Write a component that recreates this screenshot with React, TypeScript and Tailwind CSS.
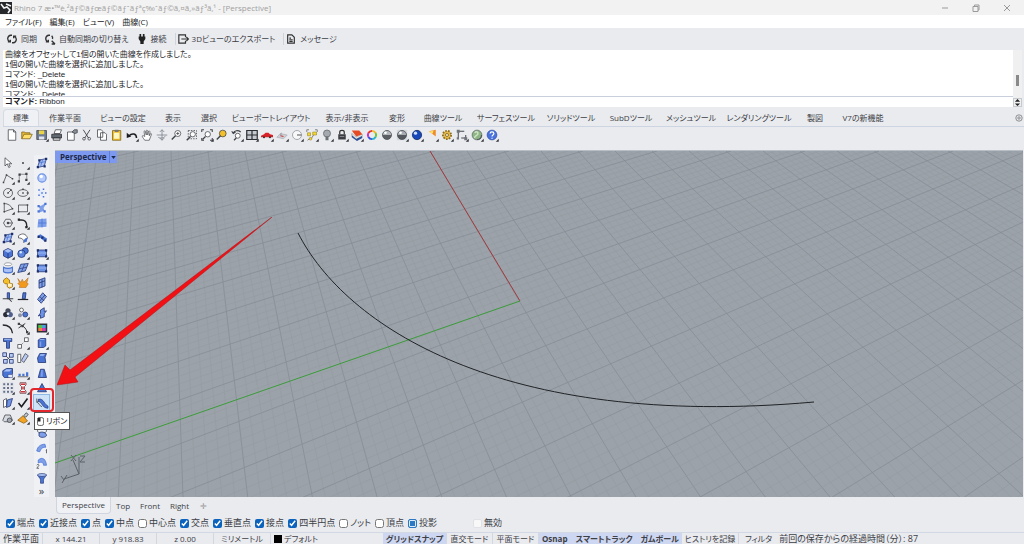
import { type ReactNode } from "react";
import clsx from "clsx";

const INK = "#3f4247";
const BLUE = "#4a74d4";
const LIGHT = "#a9c0f4";
const NAVY = "#1d2f6b";
const GOLD = "#f3c02c";

const icons: Record<string, ReactNode> = {
  // standard toolbar
  new: <path d="M3 1h7l3 3v11H3zM10 1v3h3" fill="#fff" stroke={INK} />,
  open: (
    <>
      <path d="M1 13V4h4l1 1h6v3" fill="#e6b93a" stroke="#7c6216" />
      <path d="M1 13l3-6h11l-3 6z" fill="#ffdf6b" stroke="#7c6216" />
    </>
  ),
  save: (
    <>
      <path d="M1 2h13v12H1z" fill="#6e7b94" stroke={INK} />
      <path d="M4 2h7v5H4z" fill="#e9d44a" />
      <path d="M4 10h7v4H4z" fill="#dfe4ee" />
    </>
  ),
  print: (
    <>
      <path d="M4 6l2-5h8l-2 5z" fill="#fff" stroke={INK} />
      <path d="M1 7h13v5H1z" fill="#646a73" stroke="#26282c" />
      <path d="M3 12h9v3H3z" fill="#ddd" stroke="#26282c" />
    </>
  ),
  props: (
    <>
      <path d="M2 4h9v11H2z" fill="#fff" stroke={INK} />
      <path d="M8 4l3-3h4v4l-3 1z" fill="#8b9098" stroke={INK} />
    </>
  ),
  cut: (
    <>
      <path d="M3 1l7 11M12 1L5 12" fill="none" stroke={INK} strokeWidth="1.2" />
      <circle cx="4" cy="13" r="1.8" fill="none" stroke={INK} />
      <circle cx="11" cy="13" r="1.8" fill="none" stroke={INK} />
    </>
  ),
  copy: <path d="M2 1h5l2 2v8H2zM6 5h6l2 2v8H6z" fill="#fff" stroke={INK} />,
  paste: (
    <>
      <path d="M2 2h11v13H2z" fill={GOLD} stroke="#7c6216" />
      <path d="M5 1h5v3H5z" fill="#777" />
      <path d="M4 5h7v8H4z" fill="#fdf6c6" />
    </>
  ),
  undo: (
    <>
      <path d="M14 12c0-6-6-7-10-3" fill="none" stroke="#1c1d20" strokeWidth="2" />
      <path d="M1 5v7l6-2z" fill="#1c1d20" />
    </>
  ),
  hand: <path d="M5 15C3 12 1 10 2 9s2 1 3 1L4 3c1-1 2 0 2 1l1 4V2c1-1 2 0 2 1v5l1-5c1-1 2 0 2 1l-1 5 2-3c1 0 1 1 1 1l-3 8z" fill="#fff" stroke={INK} strokeWidth="0.9" />,
  rotateView: <path d="M8 1v14M1 8h14M5 4l3-3 3 3M5 12l3 3 3-3M3 11c3 2 8 1 10-2" fill="none" stroke="#777c84" />,
  zoomIn: (
    <>
      <circle cx="9" cy="6" r="4" fill="#fff" stroke={INK} />
      <path d="M6 9l-5 5" stroke={INK} strokeWidth="2" />
      <path d="M7 6h4M9 4v4" stroke={INK} />
    </>
  ),
  zoomWindow: (
    <>
      <path d="M3 2h11v11H3z" fill="none" stroke={INK} strokeDasharray="2 1.5" />
      <circle cx="9" cy="7" r="3.5" fill="#fff" stroke={INK} />
      <path d="M6 10l-5 5" stroke={INK} strokeWidth="1.8" />
    </>
  ),
  zoomExtents: (
    <>
      <path d="M1 4V1h3M12 1h3v3M15 12v3h-3M4 15H1v-3" fill="none" stroke={INK} strokeWidth="1.4" />
      <circle cx="9" cy="7" r="3.6" fill="#fff" stroke={INK} />
      <path d="M6 10l-4 4" stroke={INK} strokeWidth="1.6" />
    </>
  ),
  zoomSelected: (
    <>
      <circle cx="9" cy="6" r="4.5" fill={GOLD} stroke={INK} />
      <path d="M6 9l-5 5" stroke={INK} strokeWidth="2" />
    </>
  ),
  undoView: (
    <>
      <path d="M13 4C9 1 5 2 3 5M1 3l2 3 3-2" fill="none" stroke={INK} strokeWidth="1.5" />
      <circle cx="9" cy="9" r="3.3" fill="#fff" stroke={INK} />
      <path d="M7 12l-3 3" stroke={INK} strokeWidth="1.6" />
    </>
  ),
  viewports: (
    <>
      <path d="M1 2h14v12H1z" fill="#c4c8cf" stroke="#2c2e33" strokeWidth="1.6" />
      <path d="M8 2v12M1 8h14" stroke="#2c2e33" strokeWidth="1.6" />
    </>
  ),
  car: (
    <>
      <path d="M0 9l4-2 2-2h4l2 2 4 1v3H0z" fill="#d8222a" />
      <circle cx="4" cy="11" r="1.4" fill="#333" />
      <circle cx="12" cy="11" r="1.4" fill="#333" />
    </>
  ),
  cplane: (
    <>
      <path d="M1 11l5-5 9 2-5 5z" fill="#ccd0d6" stroke="#9ba0a7" strokeWidth="0.7" />
      <path d="M6 9l4 1" stroke="#d03a3a" strokeWidth="1.6" />
      <path d="M6 9l1-4" stroke="#888" />
    </>
  ),
  circleSet: (
    <>
      <circle cx="8" cy="8" r="6" fill="#f8f8f8" stroke="#8b9098" />
      <path d="M8 8h6" stroke="#666" strokeWidth="1.5" />
    </>
  ),
  selectPts: (
    <>
      <path d="M1 4V1h3M12 1h3v3M6 12l-4 3M10 8l-3 5" fill="none" stroke="#666" />
      <path d="M2 5h4v4H2zM9 4h5v4H9z" fill="#f5d92c" stroke="#8b7720" strokeWidth="0.7" />
      <circle cx="6" cy="13" r="1.8" fill="#f5d92c" stroke="#8b7720" strokeWidth="0.7" />
    </>
  ),
  bulb: (
    <>
      <circle cx="8" cy="6" r="4.7" fill="#a5a9af" stroke="#5f646b" />
      <path d="M6 10h4v5H6z" fill="#6c7077" />
    </>
  ),
  lock: (
    <>
      <path d="M5 7V4c0-3 6-3 6 0v3" fill="none" stroke="#333" strokeWidth="1.6" />
      <path d="M3 7h10v7H3z" fill="#3b3d42" />
      <path d="M5 10h6" stroke="#9a9da3" />
    </>
  ),
  layers: (
    <>
      <path d="M1 8l6 5 8-4v3l-7 4-7-5z" fill="#2d4f9c" />
      <path d="M1 6l6 5 8-4v2l-8 4-6-5z" fill="#fff" stroke="#555" strokeWidth="0.5" />
      <path d="M1 2h10l4 5-8 3z" fill="#e54a25" />
    </>
  ),
  wheel: (
    <g fill="none" strokeWidth="2.6">
      <path d="M8 2.500a5.500 5.500 0 0 1 4.800 2.800" stroke="#f0b82a" />
      <path d="M12.800 5.300a5.500 5.500 0 0 1 0 5.400" stroke="#6cc634" />
      <path d="M12.800 10.700A5.500 5.500 0 0 1 8 13.500" stroke="#27b5c9" />
      <path d="M8 13.500a5.500 5.500 0 0 1-4.800-2.800" stroke="#3454dc" />
      <path d="M3.200 10.700a5.500 5.500 0 0 1 0-5.400" stroke="#c532c4" />
      <path d="M3.200 5.300A5.500 5.500 0 0 1 8 2.500" stroke="#e6332a" />
    </g>
  ),
  grayBall: (
    <>
      <circle cx="8" cy="8" r="6" fill="#5b5e63" stroke="#4a4d52" />
      <path d="M2.5 8a5.5 5.5 0 0 1 11 0z" fill="#b4b7bc" />
      <circle cx="6" cy="5" r="1.8" fill="#fff" />
    </>
  ),
  grayBallBox: (
    <>
      <path d="M1 1h14v14H1z" fill="#d5d8dc" />
      <circle cx="8" cy="8" r="6" fill="#55585d" stroke="#4a4d52" />
      <path d="M2.5 8a5.5 5.5 0 0 1 11 0z" fill="#a9acb1" />
      <circle cx="6" cy="5" r="1.8" fill="#fff" />
    </>
  ),
  blueBall: (
    <>
      <circle cx="8" cy="8" r="6.2" fill="#1747b8" stroke="#10275e" />
      <circle cx="6" cy="5.5" r="2.2" fill="#cfe0ff" />
    </>
  ),
  spot: (
    <>
      <path d="M4 3l9-2v9z" fill="#f08a24" />
      <path d="M3 4l7-2-1 4z" fill="#ffe16b" />
    </>
  ),
  gear: (
    <>
      <circle cx="8" cy="8" r="5.5" fill="#e6bb4c" stroke="#8b6c1e" strokeWidth="2.4" strokeDasharray="2.2 1.6" />
      <circle cx="8" cy="8" r="2" fill="#f5f0dc" stroke="#755a14" />
    </>
  ),
  dimension: (
    <>
      <path d="M3 12V3h8M7 12h6V8" fill="none" stroke={INK} strokeWidth="1.3" />
      <path d="M1 1h4v4H1zM11 11h4v4h-4zM1 11h3v3H1z" fill="#70757d" />
    </>
  ),
  earth: (
    <>
      <circle cx="8" cy="8" r="6.5" fill="#8fb585" stroke="#5c6b68" />
      <path d="M5 5c3-3 5 0 4 2s-5 2-4 5" fill="none" stroke="#cfe3c4" strokeWidth="2" />
      <path d="M8 14c4 0 6-3 6-6" fill="none" stroke="#55595f" strokeWidth="1.6" />
    </>
  ),
  help: (
    <>
      <circle cx="8" cy="8" r="6.5" fill="#4a72dc" stroke="#2f50a8" />
      <path d="M5.5 6c0-3 5-3 5 0 0 2-2.500 1.800-2.500 4M8 11.500v1.500" fill="none" stroke="#fff" strokeWidth="1.6" />
    </>
  ),

  // left toolbars
  pointer: <path d="M4 1v11l3-3 2 5 2-1-2-4h4z" fill="#fff" stroke={INK} />,
  point: <circle cx="8" cy="8" r="1.3" fill={INK} />,
  polyline: (
    <>
      <path d="M2 14L6 4l8 5" fill="none" stroke={INK} />
      <path d="M1 13h2v2H1zM5 3h2v2H5zM13 8h2v2h-2z" fill={INK} />
    </>
  ),
  curvePts: (
    <>
      <path d="M3 13V3h10v6" fill="none" stroke="#6d7178" />
      <path d="M2 2h3v3H2zM11 1h3v3h-3zM1 11h3v3H1zM11 9h3v3h-3z" fill={INK} />
    </>
  ),
  circle: (
    <>
      <circle cx="8" cy="8" r="6" fill="none" stroke={INK} />
      <path d="M8 8l4-4" stroke={INK} />
      <path d="M7 7h2v2H7zM11 3h2v2h-2z" fill={INK} />
    </>
  ),
  ellipse: (
    <>
      <ellipse cx="8" cy="8" rx="7" ry="4.5" fill="none" stroke={INK} />
      <path d="M7 7h2v2H7zM7 2h2v2H7zM13 7h2v2h-2z" fill={INK} />
    </>
  ),
  arc: (
    <>
      <path d="M3 2c5 0 9 3 11 7L3 13z" fill="none" stroke={INK} />
      <path d="M2 1h2v2H2zM13 8h2v2h-2zM2 12h2v2H2z" fill={INK} />
    </>
  ),
  rect: (
    <>
      <path d="M2 4h12v9H2z" fill="none" stroke={INK} />
      <path d="M1 12h2v2H1zM13 3h2v2h-2z" fill={INK} />
    </>
  ),
  polygon: (
    <>
      <path d="M5 3h6l3 5-3 5H5L2 8z" fill="none" stroke={INK} />
      <path d="M7 8h7M7 7h2v2H7z" stroke={INK} />
    </>
  ),
  fillet: (
    <>
      <path d="M2 4h4c4 0 7 3 7 8v2" fill="none" stroke="#26282c" strokeWidth="1.8" />
      <path d="M1 2h3v3H1zM11 12h3v3h-3z" fill="#26282c" />
    </>
  ),
  surface: (
    <>
      <path d="M5 4l9-2-3 10-9 2z" fill={LIGHT} stroke={NAVY} />
      <path d="M4 8l9-2M9 3L6 13" stroke={BLUE} />
      <path d="M3 3h3v3H3zM12 1h3v3h-3zM10 11h3v3h-3zM1 12h3v3H1z" fill={NAVY} />
    </>
  ),
  bend: (
    <>
      <path d="M2 5c5-4 10-3 12 3l-5 6c0-4-2-6-7-6z" fill="#fff" stroke={INK} />
      <path d="M9 14c0-4 1-6 5-6l-1 5z" fill={BLUE} />
    </>
  ),
  box: (
    <>
      <path d="M2 5l6-3 6 3v7l-6 3-6-3z" fill={BLUE} stroke={NAVY} />
      <path d="M3 5l5-2.500L13 5 8 7.500z" fill={LIGHT} />
      <path d="M8 8v7" stroke={NAVY} />
    </>
  ),
  spheres: (
    <>
      <circle cx="11" cy="5" r="4" fill={BLUE} stroke={NAVY} />
      <circle cx="6" cy="9" r="5" fill="#5f88e0" stroke={NAVY} />
      <circle cx="5" cy="7" r="1.6" fill="#dbe6ff" />
    </>
  ),
  cylinderEdit: (
    <>
      <ellipse cx="8" cy="3" rx="5" ry="2" fill="#fff" stroke="#868b93" />
      <path d="M2 7c3 2 9 2 12 0v6c-3 2-9 2-12 0z" fill={LIGHT} stroke={BLUE} strokeWidth="1.4" />
    </>
  ),
  patch: (
    <>
      <path d="M5 3l10-1-4 10-10 2z" fill="#7f9fe8" stroke={NAVY} />
      <path d="M3 9l10-2M10 3L6 13" stroke={NAVY} strokeWidth="0.8" />
    </>
  ),
  union: (
    <>
      <path d="M2 4l4-3 4 3v4l4 1v4l-4 2-3-2V9H4L2 7z" fill={GOLD} stroke="#946410" />
      <path d="M8 9h5v4H8z" fill="#fff2c4" />
    </>
  ),
  explode: <path d="M1 2l4 5 2-4 2 4 6-6-2 7 2 1-3 5H3l1-3-3-2 2-2z" fill="#f39a1e" stroke="#a35a0c" strokeWidth="0.6" />,
  trim: (
    <>
      <path d="M7 1h3v8H7z" fill={BLUE} stroke={NAVY} />
      <path d="M1 9h8l4 4M9 9h6" fill="none" stroke={INK} strokeWidth="1.4" />
    </>
  ),
  split: (
    <>
      <path d="M8 1h4l-1 8H7z" fill={BLUE} stroke={NAVY} />
      <path d="M1 10h14" stroke="#24262b" strokeWidth="1.6" />
    </>
  ),
  group: (
    <>
      <circle cx="8" cy="5" r="3.5" fill="#444b5c" />
      <circle cx="5" cy="10" r="3.5" fill="#252a36" />
      <circle cx="11" cy="10" r="3.5" fill="#4e5f8c" />
      <circle cx="8" cy="9" r="1.8" fill="#e7eaf1" />
    </>
  ),
  ungroup: (
    <>
      <circle cx="6" cy="4" r="2.6" fill="#fff" stroke={INK} />
      <circle cx="4" cy="11" r="2.6" fill="#8b93a3" />
      <circle cx="11" cy="10" r="3.3" fill={BLUE} stroke={NAVY} />
    </>
  ),
  curveArc: <path d="M1 4c7 0 12 3 13 11" fill="none" stroke="#26282c" strokeWidth="1.8" />,
  curveEdit: (
    <>
      <path d="M2 3c5 1 10 4 12 12M2 8l9-6" fill="none" stroke="#26282c" strokeWidth="1.2" />
      <path d="M1 1h3v3H1zM6 4h3v3H6zM12 12h3v3h-3z" fill={INK} />
    </>
  ),
  text: (
    <>
      <path d="M2 2h11v4H10v9H6V6H2z" fill={BLUE} stroke={NAVY} />
      <path d="M3 3h9" stroke={LIGHT} strokeWidth="1.4" />
    </>
  ),
  move: (
    <>
      <path d="M5 11l6-6" stroke={INK} strokeDasharray="1.5 1.5" />
      <path d="M1 10h5v5H1zM10 1h5v5h-5z" fill="#fff" stroke={INK} />
    </>
  ),
  copyObj: (
    <>
      <path d="M5 5l6 6M11 6l-5 5" stroke={INK} />
      <path d="M1 1h5v5H1zM10 2h5v5h-5zM2 10h5v5H2zM10 10h5v5h-5z" fill="#b9caf5" stroke={NAVY} />
    </>
  ),
  rotate: (
    <>
      <path d="M1 3h4v11H1z" fill="#fff" stroke={INK} />
      <path d="M11 2l4 3-6 9-3-3z" fill="#b9caf5" stroke={INK} />
    </>
  ),
  solidEdit: (
    <>
      <path d="M1 5l5-3h8v7l-4 5H3l-2-3z" fill={BLUE} stroke={NAVY} />
      <path d="M2 6l4-3h7l-3 3z" fill={LIGHT} />
      <path d="M8 10h6v4H8z" fill="#e1e9ff" stroke={NAVY} strokeWidth="0.6" />
    </>
  ),
  align: (
    <>
      <path d="M1 13h14" stroke={INK} />
      <path d="M2 9h3v3H2zM7 9h3v3H7zM12 7h3v5h-3z" fill={BLUE} />
    </>
  ),
  array: (
    <path d="M1 1h4v4H1zM6 1h4v4H6zM11 1h4v4h-4zM1 6h4v4H1zM6 6h4v4H6zM11 6h4v4h-4zM1 11h4v4H1zM6 11h4v4H6zM11 11h4v4h-4z" fill="#66708c" stroke="#eceef2" strokeWidth="1.2" />
  ),
  clamp: (
    <>
      <path d="M4 1h8v3l-2 2v4l2 2v3H4v-3l2-2V6L4 4z" fill="#fff" stroke="#5a2a2e" />
      <path d="M5 2h6v2H5zM5 12h6v2H5zM7 6h2v4H7z" fill="#cd343c" />
    </>
  ),
  planes: (
    <>
      <path d="M2 4l4-2v10l-4 2z" fill="#fff" stroke={INK} />
      <path d="M7 4l7-2-3 10-5 2z" fill="#6d92e6" stroke={NAVY} />
    </>
  ),
  check: <path d="M2 8l4 5L14 2" fill="none" stroke="#1c1d20" strokeWidth="2.2" />,
  cage: (
    <>
      <path d="M1 11L4 4h7l3 7-2 2H3z" fill="#d5d8de" stroke={INK} />
      <circle cx="10" cy="11" r="3" fill="#a2a7b0" stroke={INK} />
    </>
  ),
  paint: (
    <>
      <path d="M9 5l3-4 3 2-3 4z" fill="#c4c8cf" stroke={INK} />
      <path d="M8 5l6 7-5 3-8-4z" fill="#f1a426" stroke="#8a5a10" />
    </>
  ),

  // surface toolbar
  lightBall: (
    <>
      <circle cx="8" cy="8" r="5.5" fill="#b6cbfa" stroke="#6d92e6" strokeWidth="1.6" />
      <circle cx="7" cy="6" r="2.2" fill="#fff" />
    </>
  ),
  cloud: (
    <>
      <path d="M5 3l7 3-3 7-6-3z" fill="#e3ebff" />
      <path d="M3 3h2v2H3zM9 2h2v2H9zM12 7h2v2h-2zM3 10h2v2H3zM9 12h2v2H9zM7 7h2v2H7z" fill={BLUE} />
    </>
  ),
  network: (
    <>
      <path d="M3 5c4 2 6-3 11-3l-4 6 2 5c-4-2-5 1-9 1l2-5z" fill="#7f9fe8" />
      <path d="M2 4h3v3H2zM11 1h3v3h-3zM2 11h3v3H2zM10 11h3v3h-3z" fill={BLUE} />
    </>
  ),
  grid: (
    <>
      <path d="M3 3l11-1v11L2 14z" fill="#7f9fe8" />
      <path d="M8 2v12M3 8h11" stroke={BLUE} />
    </>
  ),
  blend: (
    <>
      <path d="M2 5l4-2 9 6-3 4z" fill={BLUE} />
      <path d="M2 5h3v3H2zM7 6h3v3H7zM11 10h3v3h-3z" fill={NAVY} />
    </>
  ),
  plane: (
    <>
      <path d="M2 4h12v9H2z" fill="#6d92e6" stroke={NAVY} />
      <path d="M2 8h12" stroke={LIGHT} />
      <path d="M1 3h3v3H1zM12 3h3v3h-3zM1 11h3v3H1zM12 11h3v3h-3z" fill={NAVY} />
    </>
  ),
  vertical: <path d="M4 4l8-3v11l-8 3zM4 8l8-3M8 3v11" fill="#7f9fe8" stroke={NAVY} />,
  deform: (
    <>
      <path d="M9 1l5 5-7 9-5-5z" fill="#7f9fe8" stroke={NAVY} />
      <path d="M5 6l6 6M12 4l-7 8" stroke={NAVY} />
    </>
  ),
  cutPlane: <path d="M6 4l5-3v5l3-1-3 4v4l-5 2v-4l-3 1 3-4z" fill="#6d92e6" stroke={NAVY} />,
  picture: (
    <>
      <path d="M1 2h14v12H1z" fill="#2e3138" />
      <path d="M3 4h5v4H3z" fill="#55c04a" />
      <path d="M8 4h5v4H8z" fill="#4a9fe0" />
      <path d="M3 8h5v4H3z" fill="#e8823c" />
      <path d="M8 8h5v4H8z" fill="#d33fae" />
    </>
  ),
  extrude: (
    <>
      <path d="M3 4l3-2h7v10l-3 2H3z" fill={BLUE} stroke={NAVY} />
      <path d="M4 4l2-1h6l-2 1z" fill={LIGHT} />
      <path d="M5 6h2v7H5z" fill="#7f9fe8" />
    </>
  ),
  extrudeB: (
    <>
      <path d="M5 2h9l-2 5 1 7H3l-1-6z" fill={BLUE} stroke={NAVY} />
      <path d="M6 3h6l-2 2H5z" fill={LIGHT} />
    </>
  ),
  taper: (
    <>
      <path d="M6 3h5l3 11H3z" fill={BLUE} stroke={NAVY} />
      <path d="M7 4h2v9H6z" fill="#7f9fe8" />
    </>
  ),
  cone: <path d="M8 2l6 11H2z" fill={BLUE} stroke={NAVY} />,
  ribbon: (
    <>
      <path d="M3 3c4-1 6 1 8 4s3 4 5 5v3c-4 0-6-2-8-5S5 6 3 6z" fill={BLUE} stroke={NAVY} strokeWidth="0.8" />
      <path d="M1 2v5l3-2M1 7c3 0 3 5 7 6" fill="none" stroke={INK} />
    </>
  ),
  railSweep: (
    <>
      <ellipse cx="8" cy="5" rx="6" ry="3" fill="#eef1f6" stroke={INK} />
      <path d="M4 8c4-3 10 0 10 3s-8 4-10 1z" fill="#7f9fe8" stroke={NAVY} />
    </>
  ),
  sweep: (
    <>
      <path d="M1 12C2 6 6 3 12 3l1 4c-4 0-6 1-8 6z" fill="#7f9fe8" stroke={BLUE} />
      <path d="M13 11l1-1v5" fill="none" stroke={INK} />
    </>
  ),
  sweep2: (
    <>
      <path d="M3 4c6-5 10-1 11 7h-4c0-4-3-5-7-3z" fill="#7f9fe8" stroke={BLUE} />
      <path d="M1 11c1-2 3-1 3 0l-3 4h3" fill="none" stroke={INK} />
    </>
  ),
  revolve: (
    <>
      <path d="M2 4c2 4 4 4 4 7v4h4v-4c0-3 2-3 4-7z" fill={BLUE} stroke={NAVY} strokeWidth="0.8" />
      <ellipse cx="8" cy="4" rx="6" ry="2" fill={LIGHT} stroke={NAVY} strokeWidth="0.8" />
    </>
  ),
  blank: null,
};

const standardTools = [
  "new", "open", "save.", "print", "props", "cut", "copy", "paste", "undo.", "hand", "rotateView",
  "zoomIn", "zoomWindow", "zoomExtents.", "zoomSelected", "undoView.", "viewports.", "car.", "cplane.",
  "circleSet.", "selectPts.", "bulb.", "lock.", "layers.", "wheel", "grayBall", "grayBallBox.", "blueBall.",
  "spot.", "gear.", "dimension.", "earth.", "help.",
];

const mainTools = [
  "pointer", "point.", "polyline.", "curvePts.", "circle.", "ellipse.", "arc.", "rect.", "polygon.", "fillet.",
  "surface.", "bend.", "box.", "spheres.", "cylinderEdit.", "patch.", "union.", "explode", "trim", "split",
  "group.", "ungroup.", "curveArc", "curveEdit.", "text", "move.", "copyObj", "rotate", "solidEdit.", "align.",
  "array.", "clamp.", "planes.", "check.", "cage.", "paint.",
];

const surfaceTools = [
  "surface", "lightBall", "cloud", "network", "grid", "blend", "plane.", "plane", "vertical", "deform",
  "cutPlane", "picture.", "extrude.", "extrudeB", "taper", "cone", "ribbon", "blank", "railSweep", "sweep",
  "sweep2", "revolve",
];

const menus = ["ファイル(F)", "編集(E)", "ビュー(V)", "曲線(C)"];

const history = [
  "曲線をオフセットして1個の開いた曲線を作成しました。",
  "1個の開いた曲線を選択に追加しました。",
  "コマンド: _Delete",
  "1個の開いた曲線を選択に追加しました。",
  "コマンド: _Delete",
];

const tabs = [
  { label: "標準", width: "w-[36px]" },
  { label: "作業平面", width: "w-[52px]" },
  { label: "ビューの設定", width: "w-[64px]" },
  { label: "表示", width: "w-[36px]" },
  { label: "選択", width: "w-[36px]" },
  { label: "ビューポートレイアウト", width: "w-[88px]" },
  { label: "表示/非表示", width: "w-[64px]" },
  { label: "変形", width: "w-[36px]" },
  { label: "曲線ツール", width: "w-[56px]" },
  { label: "サーフェスツール", width: "w-[70px]" },
  { label: "ソリッドツール", width: "w-[60px]" },
  { label: "SubDツール", width: "w-[60px]" },
  { label: "メッシュツール", width: "w-[60px]" },
  { label: "レンダリングツール", width: "w-[76px]" },
  { label: "製図", width: "w-[36px]" },
  { label: "V7の新機能", width: "w-[60px]" },
];

const osnaps = [
  { label: "端点", on: true },
  { label: "近接点", on: true },
  { label: "点", on: true },
  { label: "中点", on: true },
  { label: "中心点", on: false },
  { label: "交点", on: true },
  { label: "垂直点", on: true },
  { label: "接点", on: true },
  { label: "四半円点", on: true },
  { label: "ノット", on: false },
  { label: "頂点", on: false },
];

// A trailing dot on the name marks a tool that opens a flyout.
function ToolButton({ tool, active }: { tool: string; active?: boolean }) {
  const name = tool.replace(".", "");
  return (
    <button
      type="button"
      aria-label={name}
      className={clsx("flex size-[15px] items-center justify-center", active && "bg-[#cfe3f8] outline outline-[#8db9e6]")}
    >
      <svg viewBox="0 0 16 16" className="size-[12px] overflow-visible">
        {icons[name]}
        {tool.endsWith(".") && <path d="M17 13v4h-4z" fill="#33353a" />}
      </svg>
    </button>
  );
}

// Both line families run to their own vanishing point and cross y=0 at even steps.
function gridLines(vx: number, vy: number, start: number, step: number, from: number, to: number) {
  const lines = [];
  for (let i = from; i <= to; i++) {
    const x = start + (i * step) / 5;
    const end = x + ((x - vx) * 420) / -vy;
    lines.push({ x, end, major: i % 5 === 0 });
  }
  return lines;
}

function Viewport() {
  const lines = [...gridLines(100, -462, 375, 37, -150, 110), ...gridLines(2060, -440, 898, 74, -110, 130)];
  return (
    <svg viewBox="0 0 968 347" preserveAspectRatio="xMinYMin slice" className="absolute inset-0 size-full bg-[#9ba2a9]">
      {lines.map((l, i) => (
        <line
          key={i}
          x1={l.x}
          y1={0}
          x2={l.end}
          y2={420}
          stroke={l.major ? "#868d95" : "#939aa1"}
          strokeWidth={l.major ? 0.8 : 0.5}
        />
      ))}
      <path d="M375 0L465 150" stroke="#a33a3c" />
      <path d="M465 150L0 312" stroke="#3c9c3a" />
      <path d="M243 82C290 174 445 279 759 251" fill="none" stroke="#1f2226" />
      <g fill="none" stroke="#5c6268">
        <path d="M24 323L18 309M24 323L9 328M24 323V306" />
        <path d="M16 304l5 6M21 304l-5 6M25 305h5l-5 6h5M6 325l3 4M12 324l-5 8" />
      </g>
    </svg>
  );
}

function Snap({ label, on }: { label: string; on: boolean }) {
  return (
    <label className="flex items-center gap-[2px]">
      <input type="checkbox" defaultChecked={on} className="size-[9px] accent-[#0b63bd]" />
      {label}
    </label>
  );
}

function Status({ children, className }: { children: ReactNode; className?: string }) {
  return (
    <div className={clsx("flex items-center justify-center border-r border-[#d3d7e0]", className)}>{children}</div>
  );
}

export default function App() {
  return (
    <div className="flex min-h-screen flex-col overflow-hidden bg-[#e9ebef] font-['Open_Sans','Noto_Sans_CJK_JP',sans-serif] text-[9px] leading-[12px] whitespace-nowrap text-[#3d4045] [font-feature-settings:'palt']">
      <header className="flex h-[15px] items-center bg-[#f2f2f2] text-[8px] text-[#a0a0a0]">
        <svg viewBox="0 0 12 12" className="size-[12px]">
          <path d="M0 0h12v12H0z" fill="#25272a" />
          <path d="M1 2l3 4 3-1 3 3-2 3M6 2l5 2" fill="none" stroke="#f4f4f4" strokeWidth="1.6" />
        </svg>
        <h1 className="ml-[2px]">Rhino 7 æ•™è‚²ãƒ©ãƒœãƒ©ãƒˆãƒªç‰ˆãƒ©ã‚¤ã‚»ãƒ³ã‚¹ - [Perspective]</h1>
        <div className="ml-auto flex gap-[23px] pr-[13px]">
          <button type="button" aria-label="最小化">
            <svg viewBox="0 0 8 8" className="size-[8px]"><path d="M1 4h6" stroke="#9a9a9a" /></svg>
          </button>
          <button type="button" aria-label="元に戻す">
            <svg viewBox="0 0 8 8" className="size-[8px]">
              <path d="M1 2.500h5v5H1zM2.500 2.500V1H7v5H6" fill="none" stroke="#9a9a9a" />
            </svg>
          </button>
          <button type="button" aria-label="閉じる">
            <svg viewBox="0 0 8 8" className="size-[8px]"><path d="M1 1l6 6M7 1L1 7" stroke="#9a9a9a" /></svg>
          </button>
        </div>
      </header>

      <nav className="flex h-[13px] items-center gap-[8px] bg-white pl-[5px] text-[8px] text-[#222]">
        {menus.map((m) => (
          <button key={m} type="button">{m}</button>
        ))}
      </nav>

      <div className="flex h-[22px] items-center gap-[8px] pl-[7px] text-[8px]">
        <button type="button" className="flex items-center gap-1">
          <svg viewBox="0 0 12 12" className="size-[10px]" fill="none" stroke="#333" strokeWidth="1.6">
            <path d="M6 1.500H4.500A4 4 0 0 0 3 9M6 10.500h1.500A4 4 0 0 0 9 3M1 9.500h3V7M11 2.500H8V5" />
          </svg>
          同期
        </button>
        <button type="button" className="flex items-center gap-1">
          <svg viewBox="0 0 12 12" className="size-[10px] overflow-visible" fill="none" stroke="#333" strokeWidth="1.6">
            <path d="M6 1.500H4.500A4 4 0 0 0 3 9M9 6a4 4 0 0 0-1-4M1 9.500h3V7" />
            <path d="M8 8l4 4M8 12h4" />
          </svg>
          自動同期の切り替え
        </button>
        <button type="button" className="flex items-center gap-1">
          <svg viewBox="0 0 12 12" className="size-[10px]" fill="#222">
            <path d="M3 0h2v3h2V0h2v3h1v3L8 9v3H4V9L2 6V3h1z" />
          </svg>
          接続
        </button>
        <button type="button" className="flex items-center gap-1 border-l border-[#cfd3da] pl-[2px]">
          <svg viewBox="0 0 12 12" className="size-[10px] overflow-visible" fill="none" stroke="#333" strokeWidth="1.4">
            <path d="M9 4V1H1v10h8V8M4 6h9M10 3.500L12.500 6 10 8.500" />
          </svg>
          3Dビューのエクスポート
        </button>
        <button type="button" className="flex items-center gap-1 border-l border-[#cfd3da] pl-[2px]">
          <svg viewBox="0 0 12 12" className="size-[10px]" fill="none" stroke="#333" strokeWidth="1.4">
            <path d="M2 1h5l3 3v7H2zM4 5h2M4 7h4M4 9h4" />
          </svg>
          メッセージ
        </button>
      </div>

      <section className="mr-[2px] ml-[3px] flex h-[57px] text-[8px] font-['Liberation_Sans','Noto_Sans_CJK_JP',sans-serif] text-[#1b1c1f]">
        <div className="flex flex-1 flex-col bg-white">
          <div className="h-[47px] overflow-hidden border-b border-[#c9cfdd] pl-[2px] leading-[10px]">
            {history.map((line, i) => (
              <p key={i}>{line}</p>
            ))}
          </div>
          <div className="flex h-[10px] items-center gap-[2px] pl-[2px] leading-[10px]">
            <label htmlFor="command" className="font-bold">コマンド:</label>
            <input id="command" defaultValue="Ribbon" className="h-[10px] flex-1 outline-none" />
          </div>
        </div>
        <div className="flex w-[9px] flex-col bg-[#f0f0f0]">
          <div className="mx-auto mt-[25px] h-[11px] w-[3px] bg-[#8a8a8a]" />
          <button type="button" aria-label="履歴" className="mt-auto border border-[#c5c9d0]">
            <svg viewBox="0 0 8 8" className="size-[7px]"><path d="M4 0l3 3H1zM4 8l3-3H1z" fill="#222" /></svg>
          </button>
        </div>
      </section>

      <div className="mt-[2px] ml-[3px] flex h-[18px] items-stretch border-b border-[#cdd4e2] pr-px text-[8px]">
        {tabs.map((t, i) => (
          <button
            key={t.label}
            type="button"
            className={clsx(t.width, i === 0 && "rounded-t-sm border border-b-0 border-[#d5dae4] bg-[#eff1f5]")}
          >
            {t.label}
          </button>
        ))}
        <button type="button" aria-label="オプション" className="ml-auto">
          <svg viewBox="0 0 10 10" className="size-[8px]" fill="none" stroke="#777">
            <circle cx="5" cy="5" r="4" />
            <circle cx="5" cy="5" r="1.5" />
          </svg>
        </button>
      </div>
      <div className="flex h-[23px] pl-[4px]">
        {standardTools.map((t) => (
          <ToolButton key={t} tool={t} />
        ))}
      </div>

      <main className="flex flex-1">
        <div className="flex w-[55px] gap-[4px] pt-[5px]">
          <div className="grid grid-cols-[15px_15px] content-start">
            {mainTools.map((t, i) => (
              <ToolButton key={i} tool={t} />
            ))}
          </div>
          <div className="relative z-20 flex flex-col items-center bg-[#eff1f5]">
            {surfaceTools.map((t, i) => (
              <ToolButton key={i} tool={t} active={t === "ribbon"} />
            ))}
            <button type="button" className="text-[11px]">»</button>
            <div className="absolute top-[233px] -left-[4px] size-[24px] rounded-[4px] border-2 border-[#e3262b]" />
            <div role="tooltip" className="absolute top-[257px] left-0 flex h-[18px] items-center gap-[2px] border border-[#555] bg-white px-[2px] text-[8px] text-[#222]">
              <svg viewBox="0 0 8 10" className="h-[9px] w-[7px]">
                <rect x="0.5" y="0.5" width="7" height="9" rx="2" fill="#fff" stroke="#555" />
                <path d="M1 1h3v4H1z" fill="#222" />
              </svg>
              リボン
            </div>
          </div>
        </div>
        <div className="relative mr-px flex-1 border-t border-[#b8bec8]">
          <Viewport />
          <button type="button" className="relative flex h-[12px] items-center bg-[#7c99ef] pl-[5px] text-[8px] font-bold text-[#1c2747]">
            Perspective
            <span className="ml-[3px] flex h-full items-center border-l border-[#5f7dd6] px-px">
              <svg viewBox="0 0 6 4" className="h-[3px] w-[5px]"><path d="M0 0h6L3 4z" fill="#1c2747" /></svg>
            </span>
          </button>
          <svg viewBox="0 0 216 170" className="absolute top-[66px] left-[2px] z-10 h-[170px] w-[216px]">
            <path d="M215 0L13 153l-5-5-8 20 21-3-3-5z" fill="#f21015" stroke="#b01216" strokeWidth="0.5" />
          </svg>
        </div>
      </main>

      <div className="flex h-[17px] pl-[56px] text-[8px]">
        {["Perspective", "Top", "Front", "Right"].map((v, i) => (
          <button
            key={v}
            type="button"
            className={clsx("px-[5px]", i === 0 && "rounded-b border border-t-0 border-[#d0d5df] bg-[#eff1f5]")}
          >
            {v}
          </button>
        ))}
        <button type="button" aria-label="ビューを追加" className="px-[6px] text-[#999]">✛</button>
      </div>

      <div className="flex h-[18px] items-center gap-[4px] pl-[6px]">
        {osnaps.map((o) => (
          <Snap key={o.label} {...o} />
        ))}
        <label className="flex items-center gap-[2px]">
          <input
            type="checkbox"
            className="size-[9px] appearance-none rounded-[2px] border border-[#2c78c2] bg-[#2c78c2] shadow-[inset_0_0_0_1px_#dcebfa]"
          />
          投影
        </label>
        <label className="ml-[32px] flex items-center gap-[2px]">
          <input type="checkbox" className="size-[9px] appearance-none rounded-[2px] border border-[#e0e2e6] bg-[#f8f8f9]" />
          無効
        </label>
      </div>

      <footer className="flex h-[12px] border-t border-[#d3d9e4]">
        <Status className="w-[43px]">作業平面</Status>
        <Status className="w-[57px] text-[8px]">x 144.21</Status>
        <Status className="w-[57px] text-[8px]">y 918.83</Status>
        <Status className="w-[57px] text-[8px]">z 0.00</Status>
        <Status className="w-[57px] text-[8px]">ミリメートル</Status>
        <div className="flex w-[112px] items-center gap-[2px] pl-[3px] text-[8px]">
          <span className="size-[8px] bg-black" />
          デフォルト
        </div>
        <Status className="w-[64px] bg-[#ced7f1] text-[8px] font-bold">グリッドスナップ</Status>
        <Status className="w-[46px] text-[8px]">直交モード</Status>
        <Status className="w-[46px] text-[8px]">平面モード</Status>
        <div className="flex w-[143px] items-center justify-between bg-[#ced7f1] px-[3px] text-[8px] font-bold">
          <span>Osnap</span>
          <span>スマートトラック</span>
          <span>ガムボール</span>
        </div>
        <Status className="w-[57px] text-[8px]">ヒストリを記録</Status>
        <div className="flex flex-1 items-center gap-[7px] pl-[6px]">
          <span className="text-[8px]">フィルタ</span>
          <span>前回の保存からの経過時間（分）: 87</span>
        </div>
      </footer>
    </div>
  );
}
